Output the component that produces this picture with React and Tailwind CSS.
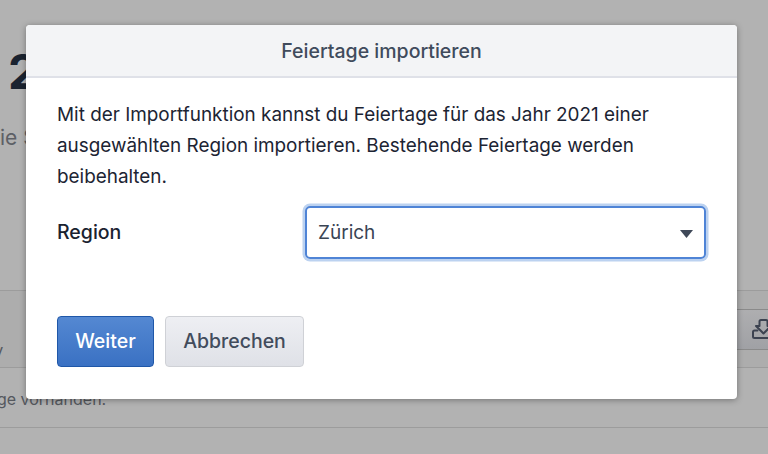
const sans = "font-['Inter','Liberation_Sans',sans-serif]"

function Backdrop() {
  return (
    <div className="absolute inset-0 bg-[#b2b2b2] text-[#1c2433]">
      <div className="h-[290px] pl-[8px] pt-[40px]">
        <div className="text-[48px] leading-[64px] font-bold text-[#1b2330]">2</div>
        <div className="mt-[20px] -ml-[8px] text-[21px] leading-[28px] text-[#5d6066] whitespace-nowrap">ie S</div>
      </div>
      <div className="flex h-[78px] flex-col border-y border-[#9c9c9c]">
        <div className="flex h-[76px] items-center justify-end bg-[#adadad]">
          <div className="flex h-[41px] w-[60px] items-center rounded-l border border-r-0 border-[#8a8a8a] bg-gradient-to-b from-[#aeaeb0] to-[#a0a1a5] pl-[42px] text-[#3c4250]">
            <svg className="shrink-0" width="24" height="24" viewBox="0 0 24 24" fill="none" stroke="currentColor" strokeWidth="2" strokeLinecap="round" strokeLinejoin="round">
              <path d="M8.500 9V4.500A1.500 1.500 0 0 1 10 3h5a1.500 1.500 0 0 1 1.500 1.500V9H20l-7.500 7.500L5 9z" />
              <path d="M6.500 13.500H3.500A1.500 1.500 0 0 0 2 15v4.500A1.500 1.500 0 0 0 3.500 21H24" />
            </svg>
          </div>
        </div>
      </div>
      <div className="h-[60px] border-b border-[#9c9c9c] pt-[19px] text-[16px] leading-[24px] text-[#55585e] whitespace-nowrap -ml-[55px]">
        Feiertage vorhanden.
      </div>
    </div>
  )
}

export default function App() {
  return (
    <div className={`relative h-[454px] w-[768px] overflow-hidden ${sans}`}>
      <Backdrop />
      <div className="absolute left-[-15px] top-[340px] text-[16px] leading-[20px] text-[#55585e]">ov</div>
      <div className="absolute left-[26px] top-[25px] h-[374px] w-[711px] overflow-hidden rounded-[4px] bg-white shadow-[0_1px_6px_rgba(0,0,0,0.35)]">
        <div className="flex h-[53px] items-center justify-center border-b-2 border-[#dfe1e8] bg-[#f3f4f6] pt-[3px] text-[19.500px] font-medium text-[#404b5c]">
          Feiertage importieren
        </div>
        <div className="px-[31px] pt-[21px]">
          <p className="text-[18.900px] leading-[31px] text-[#1c2433]">
            Mit der Importfunktion kannst du Feiertage für das Jahr 2021 einer ausgewählten Region importieren. Bestehende Feiertage werden beibehalten.
          </p>
          <div className="mt-[14px] flex items-center">
            <label className="w-[248px] text-[19.500px] font-medium text-[#1a2230]">Region</label>
            <div className="flex h-[53px] w-[401px] items-center justify-between rounded-[5px] border-2 border-[#4f84d6] pl-[11px] pr-[11px] pt-[2px] text-[19px] text-[#3a4454] shadow-[0_0_0_2.500px_#bcd2f0]">
              Zürich
              <svg width="13" height="8" viewBox="0 0 13 8"><path d="M0 0h13L6.500 8z" fill="#3f4858" /></svg>
            </div>
          </div>
          <div className="mt-[57px] flex gap-[11px]">
            <button className="h-[51px] w-[97px] rounded-[4px] border border-[#1f57a8] bg-gradient-to-b from-[#5488d2] to-[#3a71c3] pt-[1px] text-[19.500px] font-medium text-white">Weiter</button>
            <button className="h-[51px] w-[139px] rounded-[4px] border border-[#cfd1d6] bg-gradient-to-b from-[#eeeff3] to-[#dfe1e7] pt-[1px] text-[19.500px] font-medium text-[#424c5c]">Abbrechen</button>
          </div>
        </div>
      </div>
    </div>
  )
}
